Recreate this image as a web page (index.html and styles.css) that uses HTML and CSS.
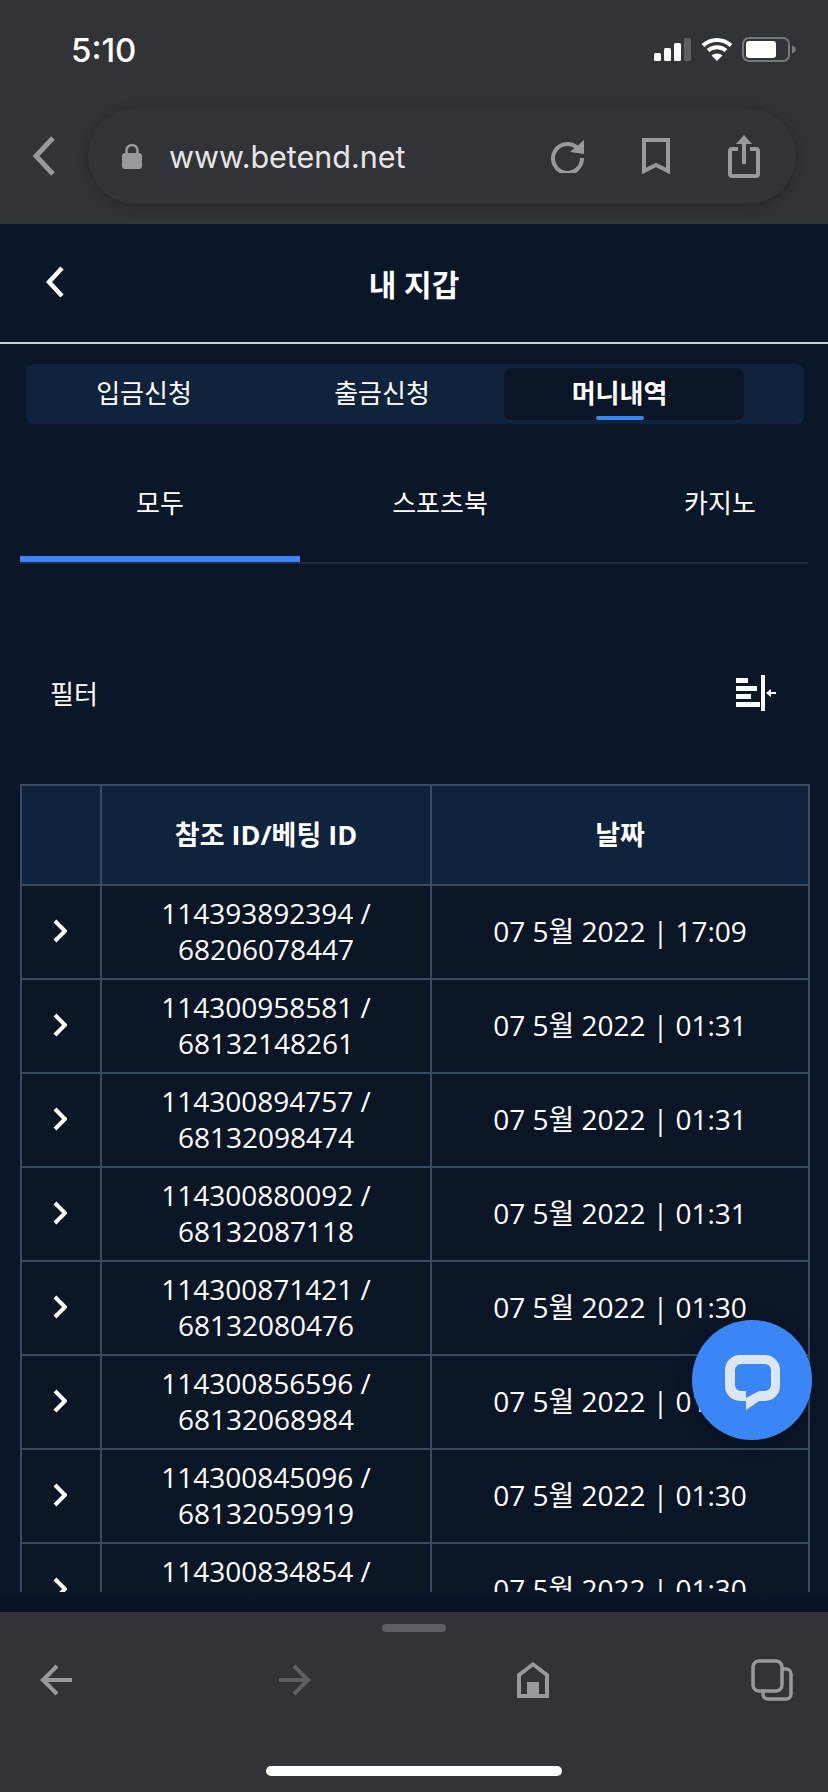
FILE: index.html

```html
<!DOCTYPE html>
<html lang="ko">
<head>
  <meta charset="UTF-8" />
  <meta name="viewport" content="width=device-width, initial-scale=1.0" />
  <title>내 지갑</title>
  <link rel="stylesheet" href="styles.css">
</head>
<body>
  <header class="browser-top">
    <div class="status-bar">
      <span class="clock">5:10</span>
      <div class="status-icons">
        <svg class="ic-signal" viewBox="0 0 37 23">
          <rect x="0" y="15" width="7" height="8" rx="1.5" fill="#fff"/>
          <rect x="10" y="10" width="7" height="13" rx="1.5" fill="#fff"/>
          <rect x="20" y="5" width="7" height="18" rx="1.5" fill="#fff"/>
          <rect x="30" y="0" width="7" height="23" rx="1.5" fill="#5d5e62"/>
        </svg>
        <svg class="ic-wifi" viewBox="0 0 32 24">
          <path d="M2 8.500C10 1 22 1 30 8.500M7 13.500C12 9 20 9 25 13.500" fill="none" stroke="#fff" stroke-width="4"/>
          <path d="M10.500 18.500C13.500 15.700 18.500 15.700 21.500 18.500L16 24Z" fill="#fff"/>
        </svg>
        <svg class="ic-battery" viewBox="0 0 54 25">
          <rect x="1" y="1" width="46" height="23" rx="6" fill="none" stroke="#77787c" stroke-width="2"/>
          <rect x="4" y="4" width="30" height="17" rx="3" fill="#fff"/>
          <path d="M50 8.500C52.500 9.500 54 11 54 12.500C54 14 52.500 15.500 50 16.500Z" fill="#77787c"/>
        </svg>
      </div>
    </div>
    <div class="address-row">
      <svg class="ic-back" viewBox="0 0 24 40">
        <path d="M21 2L4 20L21 38" fill="none" stroke="#98999f" stroke-width="5"/>
      </svg>
      <div class="url-bar">
        <svg class="ic-lock" viewBox="0 0 20 26">
          <path d="M4.500 12V7.500a5.500 5.500 0 0 1 11 0V12" fill="none" stroke="#98999f" stroke-width="2.600"/>
          <rect x="0" y="10" width="20" height="16" rx="3" fill="#98999f"/>
        </svg>
        <span class="url-text">www.betend.net</span>
        <svg class="ic-reload" viewBox="0 0 34 34">
          <path d="M26 8.500A14.500 14.500 0 1 0 31 19" fill="none" stroke="#98999f" stroke-width="4"/>
          <path d="M19 13L33 1V15Z" fill="#98999f"/>
        </svg>
        <svg class="ic-bookmark" viewBox="0 0 28 36">
          <path d="M2 2H26V33L14 27L2 33Z" fill="none" stroke="#98999f" stroke-width="4"/>
        </svg>
        <svg class="ic-share" viewBox="0 0 32 44">
          <path d="M10 15H4a2 2 0 0 0-2 2V40a2 2 0 0 0 2 2H28a2 2 0 0 0 2-2V17a2 2 0 0 0-2-2H22" fill="none" stroke="#98999f" stroke-width="4"/>
          <path d="M16 30V3" stroke="#98999f" stroke-width="4"/>
          <path d="M8 10L16 1L24 10Z" fill="#98999f"/>
        </svg>
      </div>
    </div>
  </header>

  <main class="page">
    <div class="page-head">
      <svg class="ic-head-back" viewBox="0 0 18 32">
        <path d="M16 2L3 16L16 30" fill="none" stroke="#fff" stroke-width="4.500"/>
      </svg>
      <h1>내 지갑</h1>
    </div>

    <nav class="wallet-tabs">
      <a>입금신청</a>
      <a>출금신청</a>
      <a class="active">머니내역</a>
    </nav>

    <nav class="sub-tabs">
      <a class="active">모두</a>
      <a>스포츠북</a>
      <a>카지노</a>
    </nav>

    <div class="filter-row">
      <span>필터</span>
      <svg class="ic-filter" viewBox="0 0 40 36">
        <path d="M0 3H12V8H0ZM0 11H21V16H0ZM0 19H15V24H0ZM0 27H24V32H0ZM25 0H29V36H25Z" fill="#fff"/>
        <path d="M30 18L35 14V17H40V19H35V22Z" fill="#fff"/>
      </svg>
    </div>

    <table class="history">
      <colgroup>
        <col class="col-arrow">
        <col class="col-id">
        <col class="col-date">
      </colgroup>
      <thead>
        <tr>
          <th></th>
          <th>참조 ID/베팅 ID</th>
          <th>날짜</th>
        </tr>
      </thead>
      <tbody>
        <tr>
          <td><svg class="ic-row" viewBox="0 0 14 24"><path d="M2 2L12 12L2 22" fill="none" stroke="#fff" stroke-width="4"/></svg></td>
          <td>114393892394 /<br>68206078447</td>
          <td>07 5월 2022 | 17:09</td>
        </tr>
        <tr>
          <td><svg class="ic-row" viewBox="0 0 14 24"><path d="M2 2L12 12L2 22" fill="none" stroke="#fff" stroke-width="4"/></svg></td>
          <td>114300958581 /<br>68132148261</td>
          <td>07 5월 2022 | 01:31</td>
        </tr>
        <tr>
          <td><svg class="ic-row" viewBox="0 0 14 24"><path d="M2 2L12 12L2 22" fill="none" stroke="#fff" stroke-width="4"/></svg></td>
          <td>114300894757 /<br>68132098474</td>
          <td>07 5월 2022 | 01:31</td>
        </tr>
        <tr>
          <td><svg class="ic-row" viewBox="0 0 14 24"><path d="M2 2L12 12L2 22" fill="none" stroke="#fff" stroke-width="4"/></svg></td>
          <td>114300880092 /<br>68132087118</td>
          <td>07 5월 2022 | 01:31</td>
        </tr>
        <tr>
          <td><svg class="ic-row" viewBox="0 0 14 24"><path d="M2 2L12 12L2 22" fill="none" stroke="#fff" stroke-width="4"/></svg></td>
          <td>114300871421 /<br>68132080476</td>
          <td>07 5월 2022 | 01:30</td>
        </tr>
        <tr>
          <td><svg class="ic-row" viewBox="0 0 14 24"><path d="M2 2L12 12L2 22" fill="none" stroke="#fff" stroke-width="4"/></svg></td>
          <td>114300856596 /<br>68132068984</td>
          <td>07 5월 2022 | 01:30</td>
        </tr>
        <tr>
          <td><svg class="ic-row" viewBox="0 0 14 24"><path d="M2 2L12 12L2 22" fill="none" stroke="#fff" stroke-width="4"/></svg></td>
          <td>114300845096 /<br>68132059919</td>
          <td>07 5월 2022 | 01:30</td>
        </tr>
        <tr>
          <td><svg class="ic-row" viewBox="0 0 14 24"><path d="M2 2L12 12L2 22" fill="none" stroke="#fff" stroke-width="4"/></svg></td>
          <td>114300834854 /<br>68132052210</td>
          <td>07 5월 2022 | 01:30</td>
        </tr>
      </tbody>
    </table>
  </main>

  <div class="page-fade"></div>

  <button class="chat-btn">
    <svg viewBox="0 0 55 55">
      <path fill-rule="evenodd" fill="#dde6ef" d="M15 0H40A15 15 0 0 1 55 15V31A15 15 0 0 1 40 46H34L21 55V46H15A15 15 0 0 1 0 31V15A15 15 0 0 1 15 0ZM16 9A6 6 0 0 0 10 15V30A6 6 0 0 0 16 36H21V43L34 36H40A6 6 0 0 0 46 30V15A6 6 0 0 0 40 9Z"/>
    </svg>
  </button>

  <footer class="browser-bottom">
    <div class="handle"></div>
    <div class="toolbar">
      <svg class="ic-arrow" viewBox="0 0 32 32">
        <path d="M17 2L3 16L17 30M3 16H32" fill="none" stroke="#98999f" stroke-width="4"/>
      </svg>
      <svg class="ic-arrow" viewBox="0 0 32 32">
        <path d="M15 2L29 16L15 30M29 16H0" fill="none" stroke="#5f6064" stroke-width="4"/>
      </svg>
      <svg class="ic-home" viewBox="0 0 32 36">
        <path fill-rule="evenodd" fill="#98999f" d="M16 0L32 12V36H0V12ZM16 4.500L4 14V32H10V20H22V32H28V14Z"/>
        <rect x="10" y="20" width="12" height="14" fill="#98999f"/>
      </svg>
      <svg class="ic-tabs" viewBox="0 0 42 42">
        <rect x="2" y="2" width="29" height="30" rx="6" fill="none" stroke="#98999f" stroke-width="3.500"/>
        <path d="M32 10H35a5 5 0 0 1 5 5V35a5 5 0 0 1-5 5H17a5 5 0 0 1-5-5V32" fill="none" stroke="#98999f" stroke-width="3.500"/>
      </svg>
    </div>
    <div class="home-bar"></div>
  </footer>
</body>
</html>
```

FILE: styles.css

```css
:root {
  --chrome: #323337;
  --page-bg: #0a1729;
  --cell-bg: #0a1526;
  --panel: #0f233d;
  --blue: #3b86f7;
  --line: #3a4b61;
}

* {
  box-sizing: border-box;
}

html, body {
  margin: 0;
  padding: 0;
}

body {
  position: relative;
  width: 828px;
  height: 1792px;
  overflow: hidden;
  background: var(--page-bg);
  font-family: "Open Sans", "Noto Sans CJK KR", sans-serif;
  color: white;
}

svg {
  display: block;
  flex: none;
}

/* browser chrome, top */
.browser-top {
  height: 224px;
  background: var(--chrome);
}

.status-bar {
  height: 100px;
  padding: 30px 32px 0 71px;
  display: flex;
  justify-content: space-between;
}

.clock {
  font-family: Inter, sans-serif;
  font-size: 33px;
  font-weight: 500;
  line-height: 40px;
}

.status-icons {
  display: flex;
  align-items: flex-start;
  padding-top: 7px;
}

.ic-signal { width: 37px; height: 23px; margin: 1px 10px 0 0; }
.ic-wifi { width: 32px; height: 24px; margin-right: 9px; }
.ic-battery { width: 54px; height: 25px; }

.address-row {
  display: flex;
  align-items: center;
  gap: 32px;
  padding: 8px 32px 20px;
}

.ic-back { width: 24px; height: 40px; }

.url-bar {
  flex: 1;
  height: 96px;
  border-radius: 48px;
  display: flex;
  align-items: center;
  padding: 0 36px 0 34px;
  background: var(--chrome);
  box-shadow: 0 2px 14px rgba(0, 0, 0, 0.28);
}

.ic-lock { width: 20px; height: 26px; margin-right: 27px; }

.url-text {
  flex: 1;
  font-family: Inter, sans-serif;
  font-size: 30.5px;
  color: #e6e6e8;
}

.ic-reload { width: 34px; height: 34px; margin-right: 57px; }
.ic-bookmark { width: 28px; height: 36px; margin-right: 58px; }
.ic-share { width: 32px; height: 44px; }

/* page */
.page {
  height: 1368px;
  overflow: hidden;
}

.page-head {
  height: 120px;
  padding-left: 46px;
  border-bottom: 2px solid #d2d2d2;
  display: grid;
  grid-template-columns: 1fr auto 1fr;
  align-items: center;
}

.page-head h1 {
  margin: 0;
  font-size: 30px;
  font-weight: 700;
  transform: translateX(-23px);
}

.ic-head-back { width: 18px; height: 32px; margin-bottom: 2px; }

.wallet-tabs {
  margin: 20px 24px 0 26px;
  height: 60px;
  padding: 4px 0;
  border-radius: 8px;
  background: var(--panel);
  display: grid;
  grid-template-columns: 238px 240px 240px;
}

.wallet-tabs a {
  position: relative;
  border-radius: 8px;
  padding-right: 2px;
  text-align: center;
  font-size: 26px;
  line-height: 50px;
}

.wallet-tabs a:nth-child(2) {
  padding-right: 4px;
}

.wallet-tabs a.active {
  padding-right: 9px;
  background: var(--cell-bg);
  font-weight: 700;
}

.wallet-tabs a.active::after {
  content: "";
  position: absolute;
  left: 92px;
  bottom: 0;
  width: 48px;
  height: 4px;
  border-radius: 2px;
  background: var(--blue);
}

.sub-tabs {
  margin: 24px 20px 0;
  display: flex;
  overflow: hidden;
  border-bottom: 2px solid #1f2b3d;
}

.sub-tabs a {
  flex: none;
  width: 280px;
  height: 114px;
  padding-top: 35px;
  border-bottom: 6px solid transparent;
  text-align: center;
  font-size: 26px;
  line-height: 40px;
}

.sub-tabs a.active {
  border-bottom-color: var(--blue);
}

.filter-row {
  height: 36px;
  margin: 111px 52px 73px 50px;
  display: flex;
  justify-content: space-between;
  align-items: center;
  font-size: 26px;
}

.ic-filter { width: 40px; height: 36px; }

.history {
  width: 788px;
  margin: 0 20px;
  table-layout: fixed;
  border-collapse: collapse;
  font-size: 28px;
  line-height: 36px;
  text-align: center;
}

.col-arrow { width: 80px; }
.col-id { width: 330px; }
.col-date { width: 378px; }

.history th,
.history td {
  border: 2px solid var(--line);
  padding: 0;
}

.history th {
  height: 100px;
  background: var(--panel);
  font-size: 27px;
  font-weight: 700;
}

.history td {
  height: 94px;
  padding-bottom: 2px;
  background: var(--cell-bg);
}

.ic-row {
  width: 14px;
  height: 24px;
  margin: 0 auto;
  transform: translateX(-1px);
}

.page-fade {
  height: 20px;
  background: linear-gradient(#0a1729, #071222);
}

/* chat button floats over the table */
.chat-btn {
  position: absolute;
  left: 692px;
  top: 1320px;
  width: 120px;
  height: 120px;
  border: 0;
  padding: 4px 0 0;
  border-radius: 50%;
  background: var(--blue);
  box-shadow: 0 4px 16px rgba(0, 0, 0, 0.25);
}

.chat-btn svg {
  width: 55px;
  height: 55px;
  margin: 0 auto;
}

/* browser chrome, bottom */
.browser-bottom {
  height: 180px;
  padding-top: 12px;
  background: var(--chrome);
}

.handle {
  width: 64px;
  height: 8px;
  margin: 0 auto;
  border-radius: 4px;
  background: #5d5f63;
}

.toolbar {
  height: 62px;
  margin-top: 17px;
  padding-left: 40px;
  display: flex;
  align-items: center;
  gap: 206px;
}

.ic-arrow { width: 32px; height: 32px; }
.ic-arrow + .ic-arrow { margin-left: 1px; }
.ic-home { width: 32px; height: 36px; }
.ic-tabs { width: 42px; height: 42px; margin-left: -4px; }

.home-bar {
  width: 296px;
  height: 10px;
  margin: 55px auto 0;
  border-radius: 5px;
  background: #fff;
}
```
